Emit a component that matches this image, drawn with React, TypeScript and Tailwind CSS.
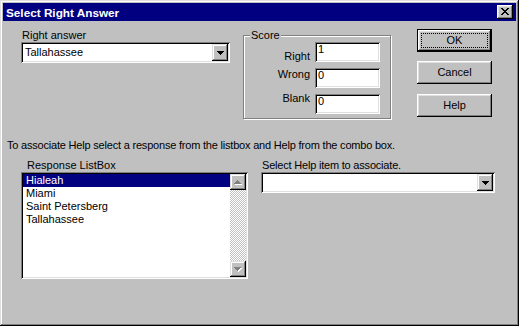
import React from 'react';

const raised = 'bg-[#c0c0c0] shadow-[inset_-1px_-1px_#000,inset_1px_1px_#fff,inset_-2px_-2px_#808080,inset_2px_2px_#dfdfdf]';
const raisedSmall = 'bg-[#c0c0c0] shadow-[inset_-1px_-1px_#000,inset_1px_1px_#dfdfdf,inset_-2px_-2px_#808080,inset_2px_2px_#fff]';
const sunken = 'bg-white shadow-[inset_1px_1px_#808080,inset_-1px_-1px_#fff,inset_2px_2px_#000,inset_-2px_-2px_#dfdfdf]';

const DownArrow: React.FC<{ color?: string }> = ({ color = '#000' }) => (
    <svg width="7" height="4" viewBox="0 0 7 4" shapeRendering="crispEdges">
        <path d="M0 0h7v1H0zM1 1h5v1H1zM2 2h3v1H2zM3 3h1v1H3z" fill={color} />
    </svg>
);

const ComboBox: React.FC<{ value?: string; width: string }> = ({ value, width }) => (
    <div className={`${sunken} ${width} h-[21px] p-[2px] flex items-center`}>
        <span className="flex-1 pl-[2px] whitespace-nowrap">{value}</span>
        <div className={`${raisedSmall} w-[16px] h-[17px] flex items-center justify-center`}>
            <DownArrow />
        </div>
    </div>
);

const Field: React.FC<{ value: string }> = ({ value }) => (
    <div className={`${sunken} w-[65px] h-[20px] pt-[1px] pl-[3px]`}>{value}</div>
);

const App: React.FC = () => {
    const cities = ['Hialeah', 'Miami', 'Saint Petersberg', 'Tallahassee'];

    return (
        <div className="w-[519px] h-[326px] p-[3px] bg-[#c0c0c0] text-black text-[11px] leading-[13px] font-['Liberation_Sans',Arial,sans-serif] shadow-[inset_-1px_-1px_#000,inset_1px_1px_#dfdfdf,inset_-2px_-2px_#808080,inset_2px_2px_#fff]">
            {/* title bar */}
            <div className="h-[18px] bg-[#000080] flex items-center justify-between pl-[3px] pr-[3px]">
                <span className="text-white font-bold text-[11.75px]">Select Right Answer</span>
                <button className={`${raised} w-[16px] h-[14px] flex items-center justify-center pb-[1px]`}>
                    <svg width="8" height="7" viewBox="0 0 8 7" shapeRendering="crispEdges">
                        <path
                            d="M0 0h2v1H0zM6 0h2v1H6zM1 1h2v1H1zM5 1h2v1H5zM2 2h4v1H2zM3 3h2v1H3zM2 4h4v1H2zM1 5h2v1H1zM5 5h2v1H5zM0 6h2v1H0zM6 6h2v1H6z"
                            fill="#000"
                        />
                    </svg>
                </button>
            </div>

            {/* top row */}
            <div className="flex items-start pl-[18px]">
                <div className="mt-[8px] w-[209px]">
                    <div className="pl-[1px]">Right answer</div>
                    <ComboBox value="Tallahassee" width="w-[209px]" />
                </div>

                <fieldset className="ml-[13px] mt-[8px] w-[148px] h-[90px] border border-[#808080] shadow-[1px_1px_0_#fff,inset_1px_1px_0_#fff]">
                    <legend className="ml-[6px] px-[1px] bg-[#c0c0c0]">Score</legend>
                    <div className="flex flex-col pr-[10px]">
                        <div className="flex justify-end items-start">
                            <span className="mt-[8px] mr-[5px]">Right</span>
                            <Field value="1" />
                        </div>
                        <div className="flex justify-end items-start mt-[5px]">
                            <span className="mr-[5px]">Wrong</span>
                            <Field value="0" />
                        </div>
                        <div className="flex justify-end items-start mt-[6px]">
                            <span className="-mt-[2px] mr-[5px]">Blank</span>
                            <Field value="0" />
                        </div>
                    </div>
                </fieldset>

                <div className="ml-[26px] mt-[8px] flex flex-col">
                    <button className={`${raised} w-[75px] h-[23px] border border-black flex`}>
                        <span className="m-[3px] flex-1 border border-dotted border-black flex items-center justify-center">OK</span>
                    </button>
                    <button className={`${raised} mt-[9px] w-[75px] h-[23px] flex items-center justify-center`}>Cancel</button>
                    <button className={`${raised} mt-[10px] w-[75px] h-[23px] flex items-center justify-center`}>Help</button>
                </div>
            </div>

            <div className="mt-[20px] pl-[4px] whitespace-nowrap tracking-[-0.2px]">
                To associate Help select a response from the listbox and Help from the combo box.
            </div>

            {/* bottom row */}
            <div className="mt-[7px] flex items-start pl-[18px]">
                <div className="w-[227px]">
                    <div className="pl-[6px]">Response ListBox</div>
                    <div className={`${sunken} h-[107px] p-[2px] flex`}>
                        <div className="flex-1 flex flex-col">
                            {cities.map((city, i) => (
                                <div
                                    key={city}
                                    className={`h-[13px] pl-[3px] whitespace-nowrap ${i === 0 ? 'bg-[#000080] text-white' : ''}`}
                                >
                                    {city}
                                </div>
                            ))}
                        </div>
                        <div className="w-[16px] flex flex-col bg-[image:repeating-conic-gradient(#c0c0c0_0_25%,#fff_0_50%)] bg-[length:2px_2px]">
                            <div className={`${raisedSmall} h-[16px] flex items-center justify-center`}>
                                <svg width="8" height="5" viewBox="0 0 8 5" shapeRendering="crispEdges">
                                    <path d="M4 1h1v1H4zM3 2h3v1H3zM2 3h5v1H2zM1 4h7v1H1z" fill="#fff" />
                                    <path d="M3 0h1v1H3zM2 1h3v1H2zM1 2h5v1H1zM0 3h7v1H0z" fill="#808080" />
                                </svg>
                            </div>
                            <div className="flex-1" />
                            <div className={`${raisedSmall} h-[16px] flex items-center justify-center`}>
                                <svg width="8" height="5" viewBox="0 0 8 5" shapeRendering="crispEdges">
                                    <path d="M1 1h7v1H1zM2 2h5v1H2zM3 3h3v1H3zM4 4h1v1H4z" fill="#fff" />
                                    <path d="M0 0h7v1H0zM1 1h5v1H1zM2 2h3v1H2zM3 3h1v1H3z" fill="#808080" />
                                </svg>
                            </div>
                        </div>
                    </div>
                </div>

                <div className="ml-[13px] w-[234px]">
                    <div className="pl-[1px] tracking-[-0.2px]">Select Help item to associate.</div>
                    <ComboBox width="w-[234px]" />
                </div>
            </div>
        </div>
    );
};

export default App;
